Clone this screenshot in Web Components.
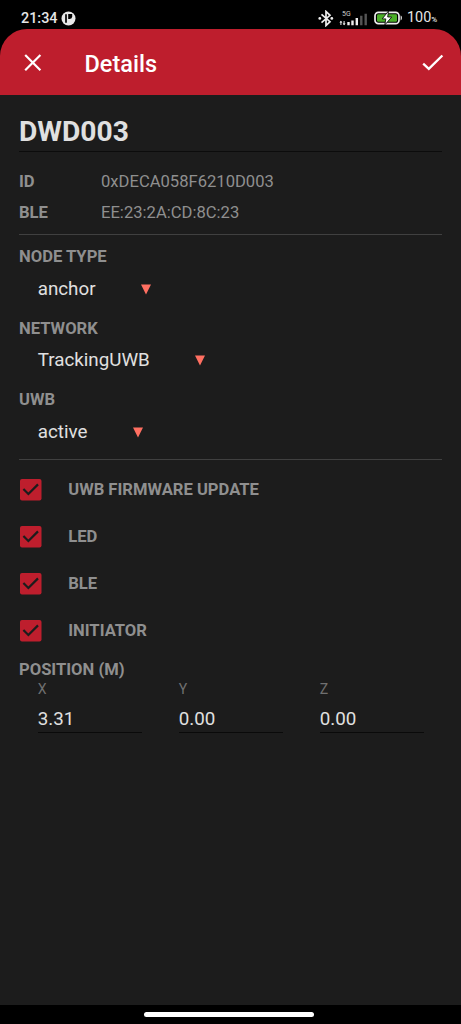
<!DOCTYPE html>
<html lang="en">
<head>
<meta charset="utf-8">
<title>Details</title>
<style>
html,body{margin:0;height:100%;background:#000}
body{font-family:Roboto,"Liberation Sans",sans-serif;color:#e0e0e0;overflow:hidden}
</style>
</head>
<body>
<node-details-screen></node-details-screen>
<script>
function define(name, html) {
  const t = document.createElement('template');
  t.innerHTML = html;
  customElements.define(name, class extends HTMLElement {
    constructor() {
      super();
      this.attachShadow({mode: 'open'}).append(t.content.cloneNode(true));
    }
  });
}

define('status-bar', `
<style>
:host{display:flex;height:29px;box-sizing:border-box;padding:7px 24px 0 21px;align-items:center;color:#e6e6e6;font-size:14.4px;line-height:22px;font-weight:500}
.time{width:37px;white-space:nowrap;padding-top:2px}
svg{display:block;flex:none}
.app{margin-left:3px}
.bt{margin-left:auto}
.sig{margin-left:5px;margin-right:6px}
.pct{width:30px;margin-left:4px;padding-top:2px;white-space:nowrap;font-size:14.4px;font-weight:400}
small{font-size:8px;font-weight:500}
</style>
<span class="time">21:34</span>
<svg class="app" width="15" height="15" viewBox="0 0 15 15"><circle cx="7.5" cy="7.5" r="7" fill="#e8e8e8"/><path d="M5 3.2v8.6" stroke="#000" stroke-width="1.7"/><path d="M7.2 3.1h4v2.4a2.4 2.4 0 0 1-2.4 2.4H7.2z" fill="#000"/></svg>
<svg class="bt" width="16" height="17" viewBox="0 0 16 17"><path d="M3.5 4.3l8.5 7.4-4 3.8v-14l4 3.8-8.5 7.4" fill="none" stroke="#eee" stroke-width="1.7"/><circle cx="1.8" cy="8.4" r="1.4" fill="#eee"/><circle cx="13.8" cy="8.4" r="1.4" fill="#eee"/></svg>
<svg class="sig" width="29" height="17" viewBox="0 0 29 17"><text x="3" y="6.3" font-family="Roboto" font-size="7" font-weight="400" fill="#ccc">5G</text><path d="M1.9 11v4M5.1 11v4" stroke="#ddd" stroke-width="1.1"/><path d="M.4 12.7l1.5-2 1.5 2zM3.6 13.2l1.5 2 1.5-2z" fill="#ddd"/><path d="M9.5 12v3.3M13.5 10.5v4.8M17.8 8v7.3" stroke="#eee" stroke-width="2.4"/><path d="M22.3 5.7v9.6M26.7 3.7v11.6" stroke="#555" stroke-width="2.4"/></svg>
<svg width="29" height="14" viewBox="0 0 29 14"><rect x="1" y="1.3" width="24" height="11.4" rx="3.4" fill="none" stroke="#eee" stroke-width="1.7"/><rect x="3" y="3.2" width="20" height="7.6" rx="1.3" fill="#4bae28"/><path d="M14.5 0L8.2 7.9h3.6L10.8 14l6.9-8h-4z" fill="#fff" stroke="#111" stroke-width=".9"/><path d="M26.6 4.6c1.7.3 1.7 4.5 0 4.8z" fill="#eee"/></svg>
<span class="pct">100<small>%</small></span>`);

define('app-bar', `
<style>
:host{display:flex;align-items:center;height:66px;box-sizing:border-box;padding:3px 17px 0 21px;background:#be1e2d;color:#fff;border-radius:27px 27px 0 0}
h1{margin:0 auto 0 39.5px;font-size:23.5px;font-weight:500;line-height:28px}
svg{display:block}
</style>
<svg width="24" height="24" viewBox="0 0 24 24"><path d="M4.2 3l15.2 15.2M19.4 3L4.2 18.2" fill="none" stroke="#fff" stroke-width="2.2"/></svg>
<h1><slot></slot></h1>
<svg width="24" height="24" viewBox="0 0 24 24"><path d="M3.2 11.7l5.6 5.2L22.4 3.5" fill="none" stroke="#fff" stroke-width="2.3"/></svg>`);

define('detail-row', `
<style>
:host{display:grid;grid-template-columns:82px 1fr;height:31px;line-height:31px;font-size:16.6px;color:#8f8f8f}
b{font-weight:700}
</style><b><slot name="label"></slot></b><span><slot></slot></span>`);

define('select-field', `
<style>
:host{display:block;height:71.7px}
b{display:block;font-size:16.6px;line-height:24px;color:#8f8f8f}
div{display:flex;align-items:center;height:39px;padding-left:18.7px;font-size:18.8px;color:#e0e0e0}
svg{margin-left:45.3px;margin-top:1px}
</style><b><slot name="label"></slot></b>
<div><slot></slot><svg width="10" height="11" viewBox="0 0 10 11"><path d="M0 .5h10L5 10.5z" fill="#ff6f61"/></svg></div>`);

define('check-row', `
<style>
:host{display:flex;align-items:center;height:47px;font-size:16.6px;font-weight:700;color:#8f8f8f}
svg{display:block;margin:0 26.7px 0 1px}
</style><svg width="21.5" height="22" viewBox="0 0 21.5 22"><rect width="21.5" height="21.5" rx="2" fill="#be1e2d"/><path d="M3.4 10l5 5L18 5.4" fill="none" stroke="#1c1c1c" stroke-width="2.2"/></svg><slot></slot>`);

define('coord-field', `
<style>
:host{display:block;width:104px}
label{display:block;font-size:14.1px;line-height:18px;color:#707070}
div{height:35px;padding-top:4px;box-sizing:border-box;line-height:34px;font-size:18.8px;border-bottom:1px solid #0a0a0a;color:#e0e0e0}
</style><label><slot name="label"></slot></label><div><slot></slot></div>`);

define('home-indicator', `
<style>
:host{display:flex;justify-content:center;height:19px;box-sizing:border-box;padding:7px 0 0;background:#000}
i{width:170px;height:5px;margin-right:3px;border-radius:3px;background:#fff}
</style><i></i>`);

define('node-details-screen', `
<style>
:host{display:flex;flex-direction:column;height:1024px;width:461px}
main{flex:1;background:#1c1c1c;padding:0 19px}
h2{margin:0;height:57px;box-sizing:border-box;padding-top:16px;font-size:28.2px;line-height:41px;border-bottom:1px solid #0c0c0c}
.ids{padding:14px 0 6px;height:62px;border-bottom:1px solid #404040}
.selects{padding-top:10px;height:214px;border-bottom:1px solid #404040}
.checks{padding-top:6px}
h3{margin:0;font-size:16.6px;line-height:24px;color:#8f8f8f;padding-top:4px}
.coords{display:flex;gap:37px;padding-left:18.7px;margin-top:-2px}
</style>
<status-bar></status-bar>
<app-bar>Details</app-bar>
<main>
<h2>DWD003</h2>
<div class="ids">
<detail-row><span slot="label">ID</span>0xDECA058F6210D003</detail-row>
<detail-row><span slot="label">BLE</span>EE:23:2A:CD:8C:23</detail-row>
</div>
<div class="selects">
<select-field><span slot="label">NODE TYPE</span>anchor</select-field>
<select-field><span slot="label">NETWORK</span>TrackingUWB</select-field>
<select-field><span slot="label">UWB</span>active</select-field>
</div>
<div class="checks">
<check-row>UWB FIRMWARE UPDATE</check-row>
<check-row>LED</check-row>
<check-row>BLE</check-row>
<check-row>INITIATOR</check-row>
</div>
<h3>POSITION (M)</h3>
<div class="coords">
<coord-field><span slot="label">X</span>3.31</coord-field>
<coord-field><span slot="label">Y</span>0.00</coord-field>
<coord-field><span slot="label">Z</span>0.00</coord-field>
</div>
</main>
<home-indicator></home-indicator>`);
</script>
</body>
</html>
